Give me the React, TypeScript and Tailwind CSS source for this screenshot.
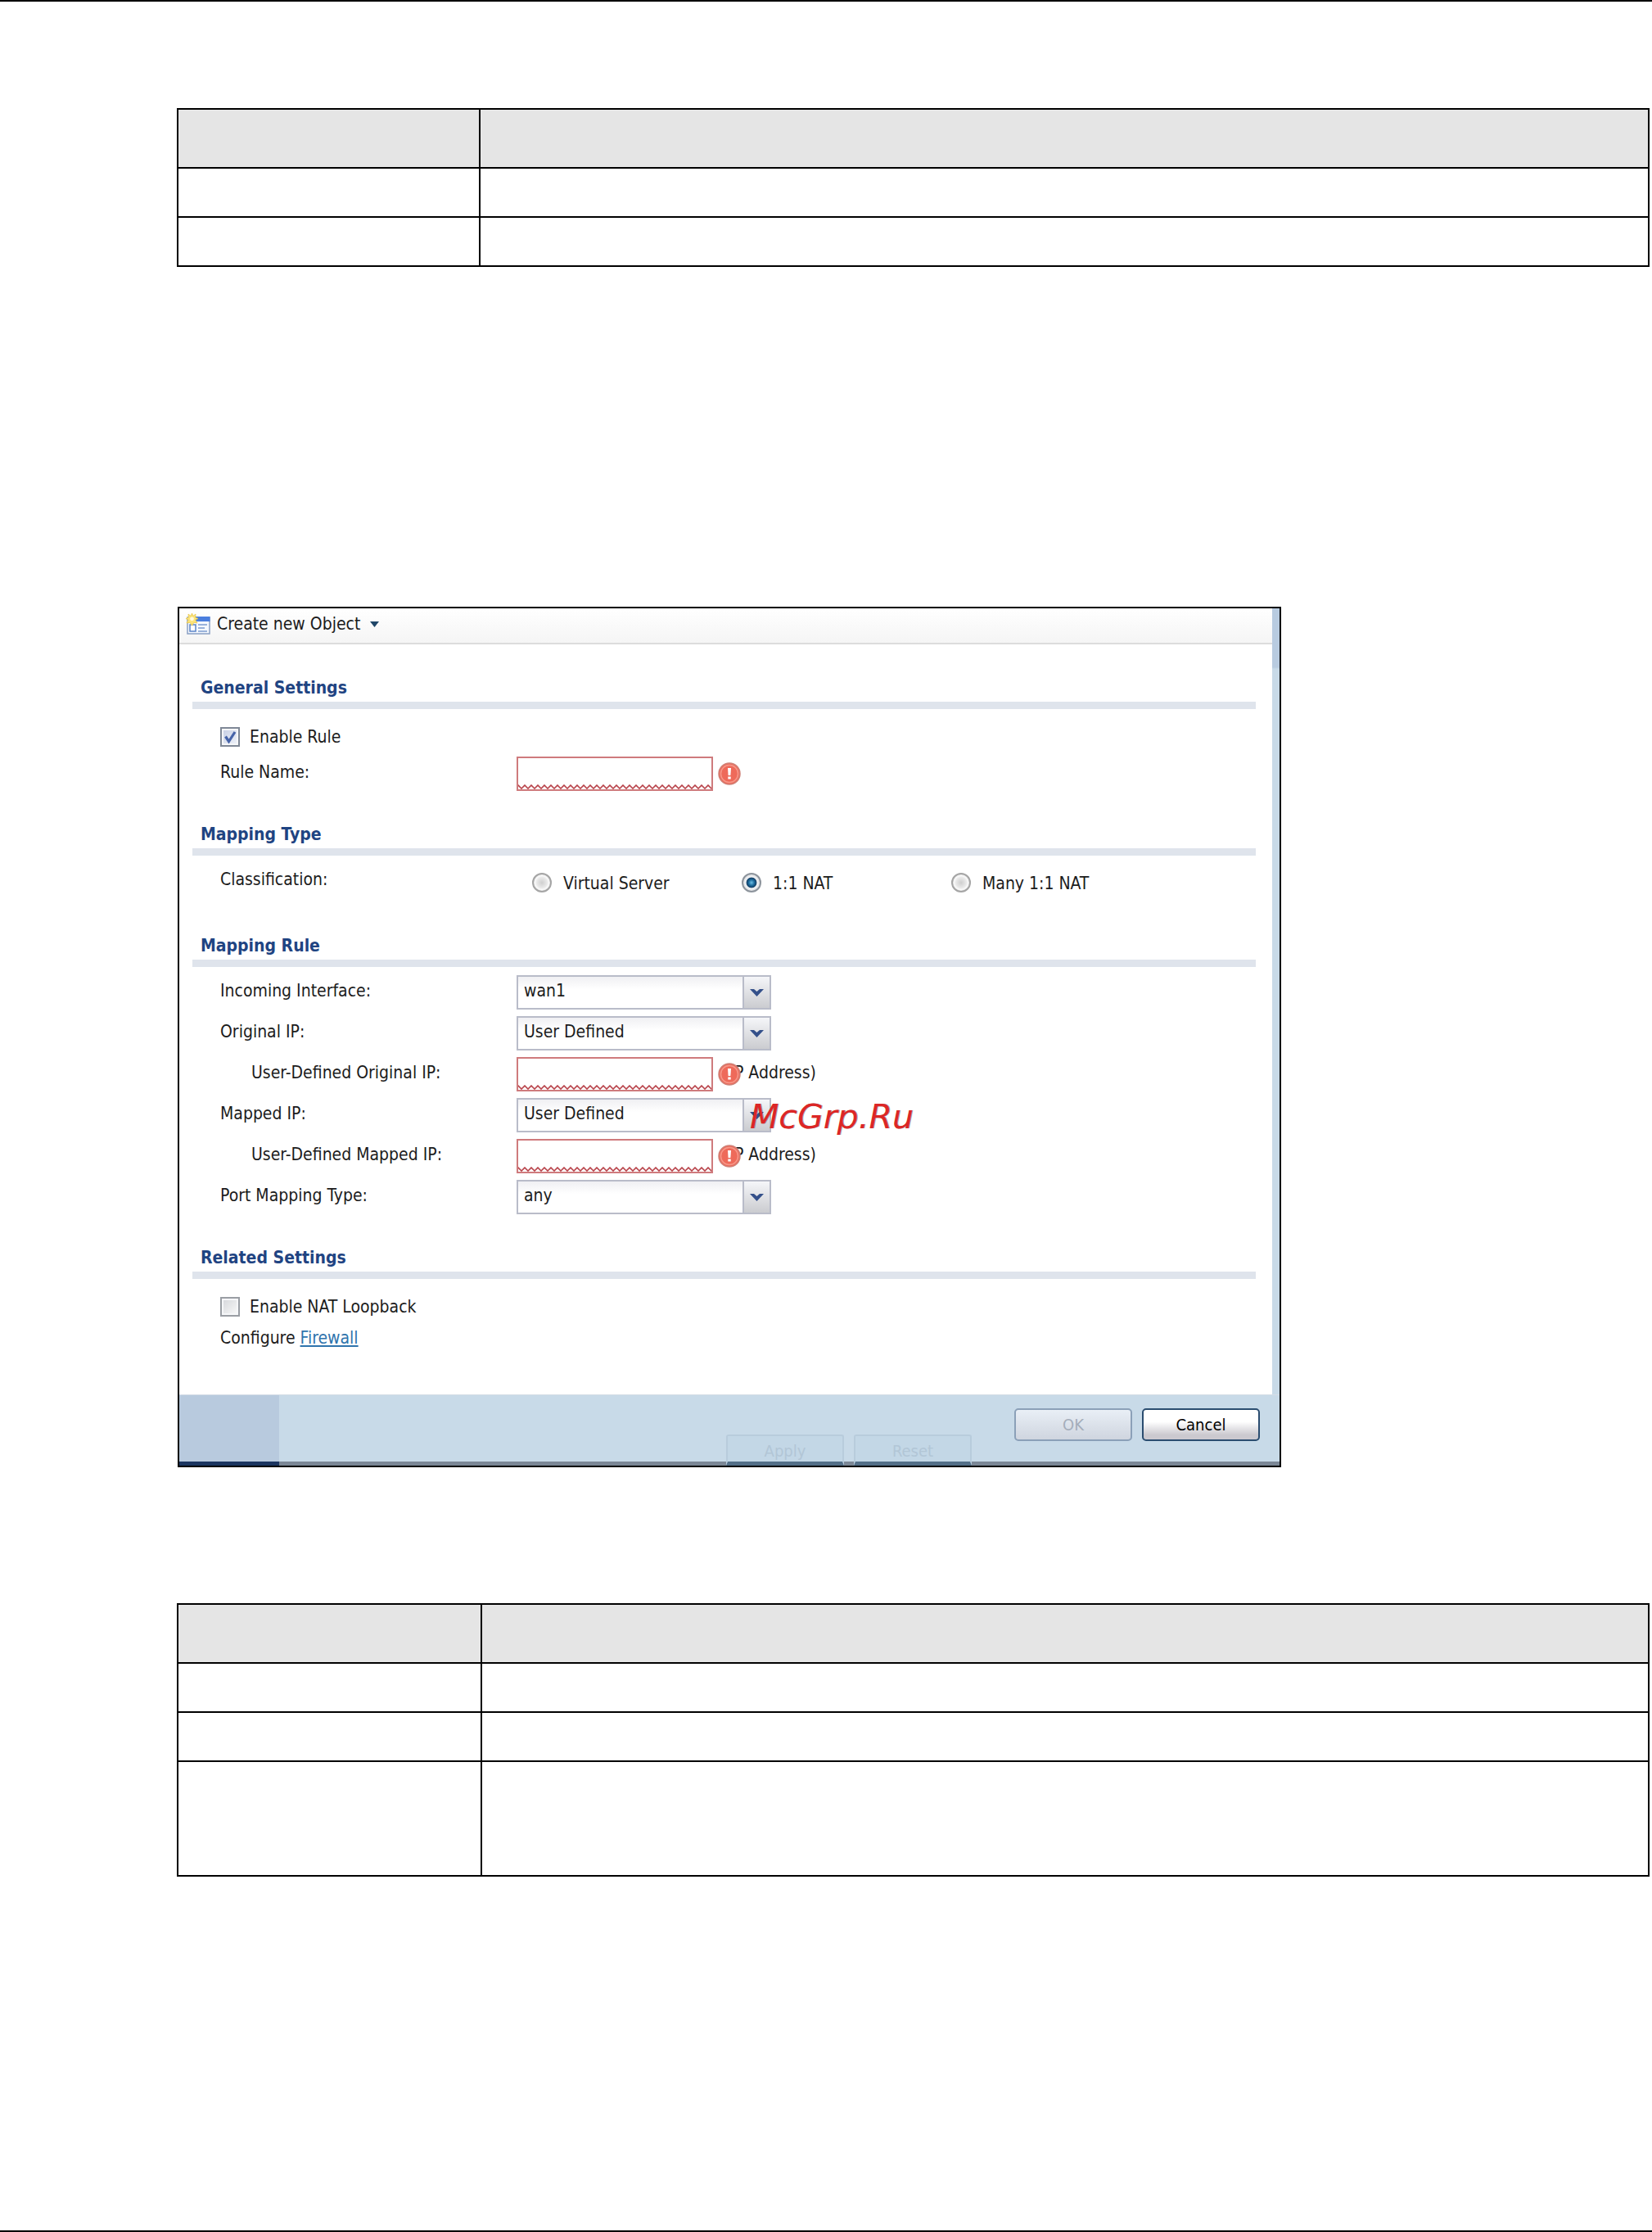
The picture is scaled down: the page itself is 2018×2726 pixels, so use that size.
import { useId, type ReactNode } from "react";

const FONT = "font-['DejaVu_Sans_Condensed','DejaVu_Sans','Noto_Sans',sans-serif]";

function DocTable({ rows, wide }: { rows: string[]; wide?: boolean }) {
  return (
    <table className="w-full table-fixed border-collapse border-2 border-black">
      <colgroup>
        <col className={wide ? "w-[371px]" : "w-[369px]"} />
        <col />
      </colgroup>
      <thead>
        <tr className="h-[72px] bg-[#e5e5e5]">
          <th className="border-2 border-black p-0" />
          <th className="border-2 border-black p-0" />
        </tr>
      </thead>
      <tbody>
        {rows.map((height, index) => (
          <tr key={index} className={height}>
            <td className="border-2 border-black p-0" />
            <td className="border-2 border-black p-0" />
          </tr>
        ))}
      </tbody>
    </table>
  );
}

function NewObjectIcon() {
  return (
    <svg width="30" height="26" viewBox="0 0 30 26" aria-hidden="true">
      <rect x="2" y="5" width="27" height="20" fill="#f4f8fe" stroke="#8aa0c4" strokeWidth="1.5" />
      <rect x="12" y="4" width="17.5" height="6" fill="#4a7ede" />
      <rect x="5" y="14" width="7" height="8" fill="#fff" stroke="#5b84c8" strokeWidth="1.5" />
      <path d="M15 14h11M15 18h8M15 22h11" stroke="#7c9ccf" strokeWidth="1.5" />
      <path
        d="M7.5 0l1.4 3.4L12 1l-.4 4L15 6.5l-3.4 1.5L14 12l-4-.8L7.5 15 5 11.2 1 12l2-4L0 6.5 3.4 5 3 1l3.100 2.400z"
        fill="#fbe37a"
        stroke="#e9c548"
        strokeWidth=".8"
      />
      <circle cx="7.5" cy="6.8" r="2.4" fill="#fffbe0" />
    </svg>
  );
}

function ErrorIcon() {
  return (
    <svg width="28" height="28" viewBox="0 0 28 28" role="img" aria-label="Error">
      <circle cx="14" cy="14" r="13" fill="#ee6a5a" stroke="#cf8177" strokeWidth="1.5" />
      <circle cx="14" cy="14" r="10.5" fill="none" stroke="#f6988a" strokeWidth="1.5" />
      <path d="M12 7h4l-.6 9h-2.8z" fill="#fff" />
      <rect x="12.3" y="17.5" width="3.4" height="3" fill="#fff" />
    </svg>
  );
}

function Section({ title, children }: { title: string; children: ReactNode }) {
  return (
    <section className="pt-[39px]">
      <h2 className="border-b-[9px] border-[#dfe4ec] pb-[3px] pl-[10px] text-[21px] leading-7 font-bold text-[#1f4482]">
        {title}
      </h2>
      <div className="pl-[34px]">{children}</div>
    </section>
  );
}

function Check({ label, checked }: { label: string; checked?: boolean }) {
  return (
    <label className="mt-[22px] flex h-6 items-center gap-3">
      <span className="relative flex size-6">
        <input
          type="checkbox"
          defaultChecked={checked}
          className="peer size-6 appearance-none border-2 border-[#9a9ea4] bg-linear-to-br from-[#d4d6da] to-[#fafafa] shadow-[inset_0_0_0_2px_#f6f7f9] checked:border-[#7f8896] checked:from-[#c5cde2] checked:to-[#f1f4fb]"
        />
        <svg
          className="pointer-events-none absolute inset-0 hidden peer-checked:block"
          viewBox="0 0 24 24"
          fill="none"
          aria-hidden="true"
        >
          <path d="M6.5 11.5l4 6 7.5-11.5" stroke="#4663a8" strokeWidth="3.2" />
        </svg>
      </span>
      {label}
    </label>
  );
}

function Row({ label, indent, children }: { label: string; indent?: boolean; children: (id: string) => ReactNode }) {
  const id = useId();
  return (
    <div className="flex h-[42px] items-center">
      <label htmlFor={id} className={indent ? "w-[362px] shrink-0 pb-1 pl-[38px]" : "w-[362px] shrink-0 pb-1"}>
        {label}
      </label>
      {children(id)}
    </div>
  );
}

function RequiredInput({ id, note }: { id: string; note?: string }) {
  const wave = useId();
  return (
    <div className="flex items-center">
      <div className="relative h-[42px] w-[240px]">
        <input id={id} type="text" className="h-full w-full border-2 border-[#cf7b7d] bg-white px-2 outline-none" />
        <svg className="pointer-events-none absolute bottom-[2px] left-[2px]" width="236" height="6" aria-hidden="true">
          <defs>
            <pattern id={wave} width="8" height="6" patternUnits="userSpaceOnUse">
              <path d="M-1 0l5 5 5-5" fill="none" stroke="#b8434a" strokeWidth="1.6" />
            </pattern>
          </defs>
          <rect width="236" height="6" fill={`url(#${wave})`} />
        </svg>
      </div>
      <div className="relative h-[28px] pl-[13px]">
        {note}
        <span className="absolute top-0 left-[6px]">
          <ErrorIcon />
        </span>
      </div>
    </div>
  );
}

function Select({ id, options }: { id: string; options: string[] }) {
  return (
    <div className="relative h-[42px] w-[311px]">
      <select
        id={id}
        className="h-full w-full appearance-none border-2 border-[#b9bcc9] bg-linear-to-b from-[#f0f0f3] to-white to-40% pr-9 pb-1 pl-[7px] outline-none"
      >
        {options.map((option) => (
          <option key={option}>{option}</option>
        ))}
      </select>
      <span className="pointer-events-none absolute inset-y-[2px] right-[2px] flex w-[33px] items-center justify-center border-l-2 border-[#b9bcc9] bg-linear-to-b from-[#f5f6f9] to-[#cbccd0]">
        <svg width="17" height="9" viewBox="0 0 17 9" aria-hidden="true">
          <path d="M0 0h5l3.500 3L12 0h5L8.500 9z" fill="#34508a" />
        </svg>
      </span>
    </div>
  );
}

function Radio({ label, checked }: { label: string; checked?: boolean }) {
  return (
    <label className="flex h-6 w-64 items-center gap-[14px] whitespace-nowrap">
      <input
        type="radio"
        name="classification"
        defaultChecked={checked}
        className="size-6 appearance-none rounded-full border-2 border-[#a5a5a5] bg-[radial-gradient(circle,#cfcfcf_0%,#e9e9e9_45%,#fafafa_60%,#dcdcdc_75%)] checked:border-[#8d949c] checked:bg-[radial-gradient(circle,#6fc0e6_0%,#1c6a9c_25%,#123f66_42%,#f2f3f5_48%,#dfe1e4_70%)]"
      />
      <span className="pt-0.5">{label}</span>
    </label>
  );
}

function GhostButton({ children }: { children: ReactNode }) {
  return (
    <button
      type="button"
      disabled
      className="h-[38px] w-36 rounded-t-[3px] border-2 border-b-[5px] border-[#b8ccdc] border-b-[#536f88] bg-[#c3d7e6] pt-1 text-[#b2c6d6]"
    >
      {children}
    </button>
  );
}

function NatDialog() {
  return (
    <div className="relative ml-px max-w-[1348px] border-2 border-black bg-linear-to-b from-[#b8cbe0] from-[72px] to-[#c8dae8] to-[74px] text-[21px] leading-6 text-[#1c1c1c]">
      <div className="mr-[9px] bg-white">
        <div className="flex h-11 items-center border-b-2 border-[#dcdcdc] bg-linear-to-b from-white to-[#f5f5f5] px-2 pb-1">
          <button type="button" className="flex items-center gap-2">
            <NewObjectIcon />
            Create new Object
            <svg className="ml-1" width="11" height="7" viewBox="0 0 11 7" aria-hidden="true">
              <path d="M0 0h11L5.500 7z" fill="#1f4668" />
            </svg>
          </button>
        </div>

        <form className="pr-5 pb-14 pl-4">
          <Section title="General Settings">
            <Check label="Enable Rule" checked />
            <div className="mt-3">
              <Row label="Rule Name:">{(id) => <RequiredInput id={id} />}</Row>
            </div>
          </Section>

          <Section title="Mapping Type">
            <div role="radiogroup" aria-label="Classification" className="mt-[17px] mb-3 flex items-start">
              <span className="w-[381px] shrink-0">Classification:</span>
              <div className="flex pt-1">
                <Radio label="Virtual Server" />
                <Radio label="1:1 NAT" checked />
                <Radio label="Many 1:1 NAT" />
              </div>
            </div>
          </Section>

          <Section title="Mapping Rule">
            <div className="mt-[10px] flex flex-col gap-2">
              <Row label="Incoming Interface:">{(id) => <Select id={id} options={["wan1"]} />}</Row>
              <Row label="Original IP:">{(id) => <Select id={id} options={["User Defined"]} />}</Row>
              <Row label="User-Defined Original IP:" indent>
                {(id) => <RequiredInput id={id} note="(IP Address)" />}
              </Row>
              <Row label="Mapped IP:">{(id) => <Select id={id} options={["User Defined"]} />}</Row>
              <Row label="User-Defined Mapped IP:" indent>
                {(id) => <RequiredInput id={id} note="(IP Address)" />}
              </Row>
              <Row label="Port Mapping Type:">{(id) => <Select id={id} options={["any"]} />}</Row>
            </div>
          </Section>

          <Section title="Related Settings">
            <Check label="Enable NAT Loopback" />
            <p className="mt-[14px] pb-px">
              Configure{" "}
              <a href="#firewall" className="text-[#2f74ad] underline decoration-2 underline-offset-2">
                Firewall
              </a>
            </p>
          </Section>
        </form>
      </div>

      <div className="relative flex h-[87px] border-t border-[#d5dde6] text-[20px]">
        <div className="w-[122px] border-b-[5px] border-[#1b3560] bg-[#b8cade]" />
        <div className="flex flex-1 items-start justify-end gap-3 border-b-[5px] border-[#7b8796] bg-[#c8dae8] pt-4 pr-6">
          <button
            type="button"
            disabled
            className="h-10 w-36 rounded-[5px] border-2 border-[#8ba0b8] bg-linear-to-b from-[#e9eff6] to-[#cfd5df] text-[#a4adba]"
          >
            OK
          </button>
          <button
            type="button"
            className="h-10 w-36 rounded-[5px] border-2 border-[#2b4d70] bg-linear-to-b from-white from-40% to-[#cbc9cf] to-85% text-black"
          >
            Cancel
          </button>
        </div>
        <div className="absolute bottom-0 left-[668px] flex gap-3">
          <GhostButton>Apply</GhostButton>
          <GhostButton>Reset</GhostButton>
        </div>
      </div>

      <span className="pointer-events-none absolute top-[597px] left-[697px] font-['DejaVu_Sans',sans-serif] text-[41px] leading-[48px] text-[#dc2626] italic [text-shadow:1px_0_0_#3a3a3a80]">
        McGrp.Ru
      </span>
    </div>
  );
}

export default function App() {
  return (
    <main className={`${FONT} flex min-h-screen flex-col border-y-2 border-black bg-white pt-[130px] pr-[3px] pl-[216px]`}>
      <DocTable rows={["h-[60px]", "h-[60px]"]} />
      <div className="mt-[415px] mb-[166px]">
        <NatDialog />
      </div>
      <DocTable rows={["h-[60px]", "h-[60px]", "h-[140px]"]} wide />
    </main>
  );
}
